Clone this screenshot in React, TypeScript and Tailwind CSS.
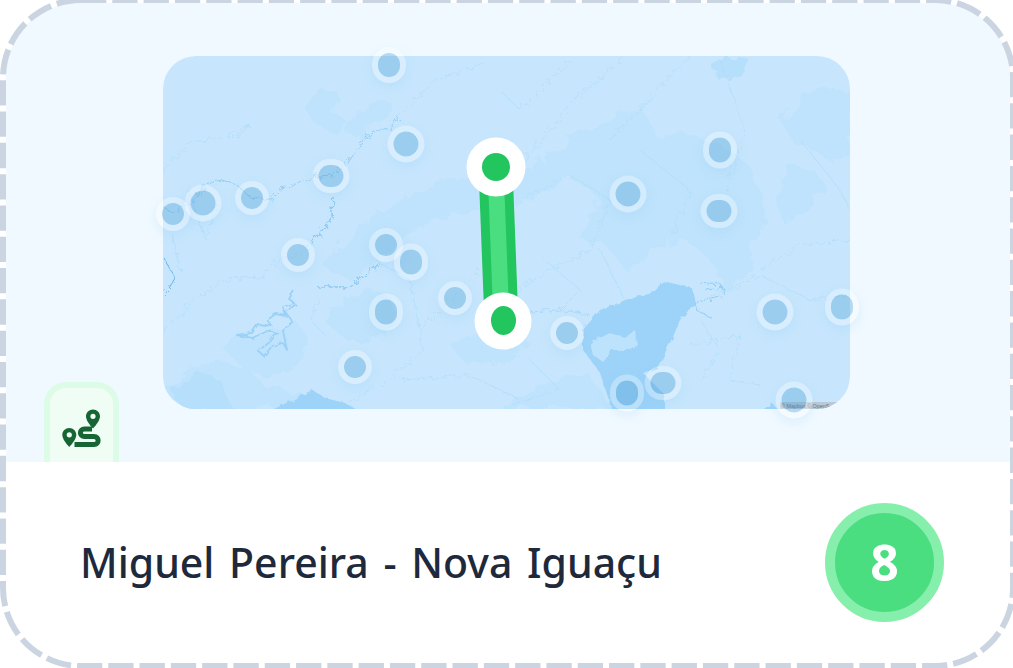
const markers = [
  [389, 65, 34, 36],
  [406, 144, 37, 37],
  [331, 176, 37, 34],
  [203, 203, 37, 37],
  [173, 214, 34, 34],
  [252, 198, 34, 34],
  [298, 255, 34, 34],
  [386, 245, 34, 34],
  [411, 262, 34, 37],
  [386, 312, 34, 37],
  [455, 298, 34, 34],
  [355, 367, 34, 34],
  [720, 150, 34, 37],
  [628, 194, 37, 37],
  [719, 211, 37, 34],
  [567, 333, 34, 34],
  [775, 312, 37, 37],
  [842, 307, 34, 37],
  [663, 383, 37, 34],
  [627, 393, 34, 37],
  [794, 400, 37, 37],
];

function MapBackground() {
  return (
    <svg viewBox="163 56 687 353" className="block h-full w-full">
      <defs>
        <filter id="rough-land" x="-5%" y="-5%" width="110%" height="110%">
          <feTurbulence type="fractalNoise" baseFrequency="0.07" numOctaves="4" seed="4" />
          <feDisplacementMap in="SourceGraphic" scale="16" />
        </filter>
        <filter id="rough-river" x="-5%" y="-5%" width="110%" height="110%">
          <feTurbulence type="fractalNoise" baseFrequency="0.16" numOctaves="3" seed="9" />
          <feDisplacementMap in="SourceGraphic" scale="9" />
        </filter>
        <filter id="rough-water" x="-5%" y="-5%" width="110%" height="110%">
          <feTurbulence type="fractalNoise" baseFrequency="0.12" numOctaves="3" seed="2" />
          <feDisplacementMap in="SourceGraphic" scale="5" />
        </filter>
      </defs>
      {/* higher ground */}
      <g fill="#bfe3fc" filter="url(#rough-land)">
        <path d="M323 267 L352 232 L383 210 L412 196 L450 180 L490 176 L533 167 L552 150 L580 133 L610 118 L640 107 L650 122 L657 137 L680 132 L700 137 L725 148 L747 163 L760 195 L770 223 L750 243 L753 263 L742 282 L730 297 L722 280 L720 273 L705 255 L687 240 L653 247 L640 262 L627 273 L612 252 L600 240 L580 240 L590 220 L600 200 L590 190 L573 180 L548 190 L520 203 L485 208 L450 215 L420 226 L400 240 L375 262 L350 280 Z" />
        <path d="M325 322 L345 298 L375 288 L392 300 L395 325 L380 340 L350 342 Z" />
        <path d="M450 345 L470 335 L510 328 L530 340 L520 356 L490 362 L462 360 Z" />
        <path d="M305 100 L322 92 L335 88 L340 100 L330 112 L345 118 L338 135 L322 128 L310 120 Z" />
        <path d="M345 120 L365 108 L390 100 L392 118 L372 122 L365 138 L348 136 Z" />
        <path d="M780 120 L800 100 L820 92 L850 88 L850 150 L835 165 L815 150 L795 145 Z" />
        <path d="M790 165 L815 170 L825 185 L800 215 L782 222 L776 195 Z" />
        <path d="M163 392 L185 372 L215 360 L250 368 L262 385 L300 392 L320 409 L163 409 Z" />
        <path d="M500 409 L530 388 L560 378 L590 375 L612 409 Z" />
        <path d="M220 345 L260 330 L300 325 L310 345 L295 372 L250 375 Z" />
      </g>
      <g fill="#b6dffb" filter="url(#rough-land)">
        <path d="M172 388 L200 372 L220 380 L232 409 L180 409 Z" />
        <path d="M716 62 L730 56 L748 58 L745 72 L728 80 L714 76 Z" />
      </g>
      {/* the bay */}
      <g fill="#9dd3f8" filter="url(#rough-water)">
        <path d="M633 297 L650 295 L658 288 L667 282 L692 288 L695 303 L680 320 L673 337 L663 357 L657 368 L643 373 L663 393 L665 412 L613 412 L600 373 L583 350 L583 330 L600 310 Z" />
        <path d="M268 412 L300 396 L312 390 L325 398 L345 403 L360 412 Z" />
        <path d="M760 412 L772 403 L780 412 Z" />
      </g>
      <path d="M590 343 L610 333 L625 338 L635 330 L637 345 L628 350 L612 350 L603 362 L593 355 Z" fill="#bde2fb" filter="url(#rough-water)" />
      {/* rivers */}
      <g fill="none" stroke="#8cc9f3" strokeWidth="0.9" strokeLinejoin="round" filter="url(#rough-river)">
        <path d="M163 207 L173 213 L190 203 L208 183 L222 180 L237 185 L250 197 L273 200 L280 188 L297 185 L310 177 L330 175 L350 160 L363 140 L377 130 L390 128 L398 117" />
        <path d="M333 197 L332 217 L322 230 L312 243" strokeWidth="1.6" />
        <path d="M317 287 L347 287 L363 277 L380 263" strokeWidth="1.3" />
        <path d="M163 257 L175 278 L168 290 L163 297" stroke="#5dafe9" />
        <path d="M700 283 L722 285 L725 295 L700 300 L696 310 L712 318" />
        <path d="M705 290 L725 288" />
      </g>
      <g fill="none" stroke="#aedbf9" strokeWidth="0.7" strokeLinejoin="round" filter="url(#rough-river)">
        <path d="M398 117 L417 97 L437 80 L483 63" />
        <path d="M312 243 L297 257 L277 260 L263 277 L240 278 L217 283 L207 293 L190 300 L180 318 L163 330" />
        <path d="M380 263 L410 280 L420 333 L423 352 L383 383 L350 403" />
        <path d="M163 170 L190 142 L222 138 L250 125 L232 140" />
        <path d="M188 190 L205 240 L218 205" />
        <path d="M173 235 L180 270" />
        <path d="M420 330 L460 290 L480 270" />
        <path d="M320 300 L310 320 L325 335" />
        <path d="M485 315 L560 310 L590 315" stroke="#9bd1f7" />
        <path d="M500 90 L520 110 L570 60" />
        <path d="M525 160 L575 100 L625 56" />
        <path d="M610 140 L640 110 L670 75 L690 56" />
        <path d="M520 200 L570 175 L610 200 L590 250 L530 280 L510 295" />
        <path d="M600 250 L625 300" />
        <path d="M760 270 L800 245 L850 240" />
        <path d="M700 300 L760 275 L810 300 L850 295" />
        <path d="M700 320 L720 350 L700 380" />
        <path d="M720 60 L745 130 L725 190" />
        <path d="M800 140 L840 190 L850 210" />
        <path d="M530 360 L560 390 L510 405" />
        <path d="M400 380 L470 375 L520 400" />
        <path d="M545 260 L580 290 L560 310" />
        <path d="M640 150 L690 190 L670 240" />
        <path d="M690 345 L740 335 L730 380 L760 385" />
      </g>
      {/* reservoir */}
      <path
        d="M293 290 L288 298 L294 303 L283 307 L286 316 L276 314 L267 320 L272 326 L258 324 L252 333 L237 335 L252 338 L268 331 L277 333 L270 342 L258 351 L264 356 L272 346 L283 343 L287 350 L283 331 L292 322 L286 312 L296 304"
        fill="none"
        stroke="#9bd1f7"
        strokeWidth="1.8"
        strokeLinejoin="round"
        filter="url(#rough-water)"
      />
      <rect x="780" y="402" width="70" height="7" fill="#b5bfc7" fillOpacity="0.75" />
      <text x="781" y="408" fontSize="5.4" fill="#6b7280" fontFamily="Liberation Sans, sans-serif">
        © Mapbox © OpenS
      </text>
    </svg>
  );
}

function RouteLine() {
  return (
    <svg viewBox="163 56 687 353" className="absolute inset-0 h-full w-full overflow-visible">
      <path d="M479 180 L513 180 L518 310 L484 310 Z" fill="#22c55e" />
      <path d="M488 180 L504 180 L509 310 L493 310 Z" fill="#4ade80" />
      <circle cx="496" cy="167" r="29.5" fill="#ffffff" />
      <circle cx="496" cy="167" r="14" fill="#22c55e" />
      <circle cx="503" cy="321" r="28.5" fill="#ffffff" />
      <ellipse cx="503.5" cy="320.5" rx="12.5" ry="14.5" fill="#22c55e" />
    </svg>
  );
}

function RouteIcon() {
  return (
    <svg viewBox="60 406 44 44" className="h-11 w-11" fill="#166534">
      <path
        fillRule="evenodd"
        d="M69.3 428 C73.2 428 76.3 431 76.3 434.8 C76.3 438.8 72.6 443.5 69.3 447 C66 443.5 62.3 438.8 62.3 434.8 C62.3 431 65.4 428 69.3 428 Z M69.3 432.2 A2.6 2.6 0 1 0 69.3 437.4 A2.6 2.6 0 1 0 69.3 432.2 Z"
      />
      <path
        fillRule="evenodd"
        d="M93 409.5 C96.9 409.5 100 412.5 100 416.3 C100 420.3 96.3 425 93 428.5 C89.7 425 86 420.3 86 416.3 C86 412.5 89.1 409.5 93 409.5 Z M93 413.7 A2.6 2.6 0 1 0 93 418.9 A2.6 2.6 0 1 0 93 413.7 Z"
      />
      <path
        d="M92 429 H84.5 C79 429 79 436.5 84.5 436.5 H94 C99.5 436.5 99.5 444.5 94 444.5 H74.5"
        fill="none"
        stroke="#166534"
        strokeWidth="5"
      />
    </svg>
  );
}

export default function App() {
  return (
    <div className="relative h-[668px] w-[1013px] overflow-hidden bg-white pt-[3px] pr-[3px] pb-[2px] pl-[6px]">
      <div className="flex h-full flex-col overflow-hidden rounded-[72px] bg-white">
        <div className="relative h-[459px] shrink-0 bg-[#f0f9ff] pt-[53px] pl-[157px]">
          <div className="relative h-[353px] w-[687px]">
            <div className="h-full w-full overflow-hidden rounded-[33px] bg-[#c7e6fd]">
              <MapBackground />
            </div>
            {markers.map(([x, y, w, h], i) => (
              <div
                key={i}
                className="absolute -translate-x-1/2 -translate-y-1/2 rounded-full border-[6px] border-white/30 bg-[#4a9fd5]/35 bg-clip-padding shadow-[0_4px_12px_rgba(125,195,245,0.18)]"
                style={{ left: x - 163, top: y - 56, width: w, height: h }}
              />
            ))}
            <RouteLine />
          </div>
          <div className="absolute bottom-0 left-[38px] flex h-[80px] w-[75px] items-center justify-center rounded-t-[22px] border-[6px] border-b-0 border-[#dcfce7] bg-[#f0fdf4] pt-[6px]">
            <RouteIcon />
          </div>
        </div>
        <div className="flex flex-1 items-center justify-between pr-[66px] pb-[3px] pl-[74px]">
          <h1 className="font-['Noto_Sans',sans-serif] text-[41px] font-medium text-[#1e293b] [word-spacing:4px]">
            Miguel Pereira - Nova Iguaçu
          </h1>
          <div className="flex h-[119px] w-[119px] items-center justify-center rounded-full border-[10px] border-[#86efac] bg-[#4ade80] font-['Open_Sans',sans-serif] text-[50px] font-bold text-white">
            8
          </div>
        </div>
      </div>
      <svg className="pointer-events-none absolute inset-0" width="1013" height="668" fill="none">
        <rect x="3" y="0" width="1010" height="666" rx="78" stroke="#cbd5e1" strokeWidth="6" strokeDasharray="25.3 6" />
      </svg>
    </div>
  );
}
